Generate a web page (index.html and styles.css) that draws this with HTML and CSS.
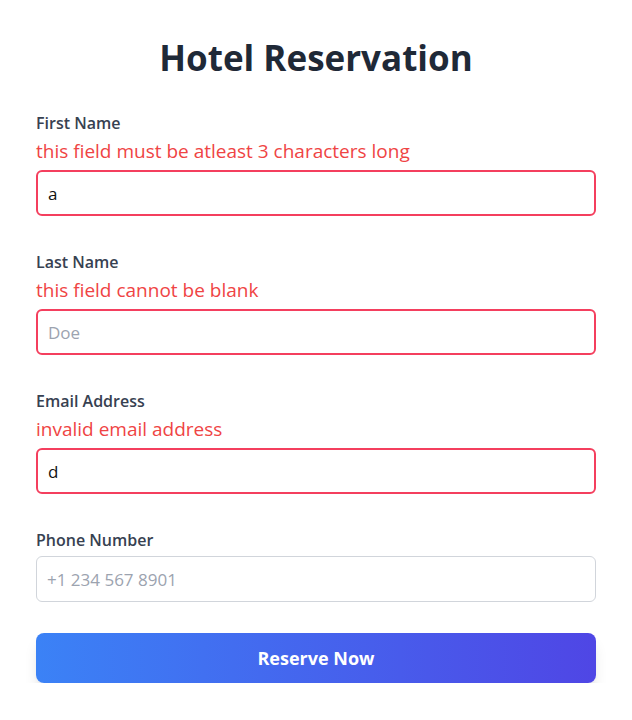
FILE: index.html
```html
<!DOCTYPE html>
<html lang="en">
<head>
<meta charset="utf-8">
<title>Hotel Reservation</title>
<link rel="stylesheet" href="styles.css">
</head>
<body>
<main class="page">
  <h1 class="title">Hotel Reservation</h1>
  <form class="form">
    <div class="field">
      <label class="label" for="first">First Name</label>
      <p class="error">this field must be atleast 3 characters long</p>
      <input class="input input-error" id="first" type="text" value="a" placeholder="John">
    </div>
    <div class="field">
      <label class="label" for="last">Last Name</label>
      <p class="error">this field cannot be blank</p>
      <input class="input input-error" id="last" type="text" placeholder="Doe">
    </div>
    <div class="field">
      <label class="label" for="email">Email Address</label>
      <p class="error">invalid email address</p>
      <input class="input input-error" id="email" type="text" value="d" placeholder="john@example.com">
    </div>
    <div class="field">
      <label class="label" for="phone">Phone Number</label>
      <input class="input" id="phone" type="text" placeholder="+1 234 567 8901">
    </div>
    <button class="button" type="button">Reserve Now</button>
  </form>
</main>
</body>
</html>
```
FILE: styles.css
```css
* { box-sizing: border-box; }
html, body { margin: 0; padding: 0; background: #ffffff; }
body {
  font-family: "Open Sans", "Noto Sans", sans-serif;
  color: #1f2937;
}
.page {
  width: 560px;
  margin: 0 auto;
  padding-top: 38px;
}
.title {
  margin: 0 0 33px;
  font-size: 35px;
  line-height: 40px;
  font-weight: 700;
  text-align: center;
  color: #1f2937;
}
.form { display: flex; flex-direction: column; }
.field {
  display: flex;
  flex-direction: column;
  margin-bottom: 34px;
}
.field:last-of-type { margin-bottom: 30px; }
.label {
  font-size: 16px;
  line-height: 24px;
  font-weight: 600;
  color: #374151;
  margin-bottom: 4px;
}
.error {
  margin: -2px 0 5px;
  font-size: 19px;
  line-height: 28px;
  color: #ef4444;
}
.input {
  height: 46px;
  width: 100%;
  padding: 0 10px;
  font-family: inherit;
  font-size: 17px;
  color: #111111;
  border: 1px solid #d1d5db;
  border-radius: 6px;
  outline: none;
  background: #ffffff;
}
.input::placeholder { color: #9ca3af; }
.input-error { border: 2px solid #f43f5e; }
.button {
  height: 50px;
  width: 100%;
  margin-top: 1px;
  border: none;
  border-radius: 8px;
  background: linear-gradient(to right, #3b82f6, #4f46e5);
  color: #ffffff;
  font-family: inherit;
  font-size: 18px;
  font-weight: 700;
  box-shadow: 0 10px 15px -3px rgba(0,0,0,0.12), 0 4px 6px -4px rgba(0,0,0,0.12);
  cursor: pointer;
}
```
